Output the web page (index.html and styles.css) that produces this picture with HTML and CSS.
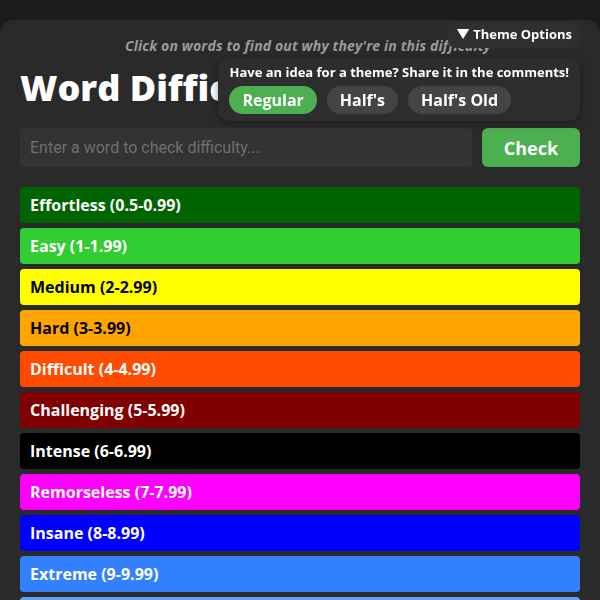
FILE: index.html
```html
<!DOCTYPE html>
<html>
<head>
<meta charset="utf-8">
<link rel="stylesheet" href="styles.css">
</head>
<body>
<div class="page">
  <p class="hint">Click on words to find out why they're in this difficulty</p>
  <h1 class="title">Word Difficulty Checker</h1>
  <div class="search">
    <input class="search-input" type="text" placeholder="Enter a word to check difficulty...">
    <button class="check-btn">Check</button>
  </div>
  <div class="levels">
    <div class="level lv-effortless">Effortless (0.5-0.99)</div>
    <div class="level lv-easy">Easy (1-1.99)</div>
    <div class="level lv-medium">Medium (2-2.99)</div>
    <div class="level lv-hard">Hard (3-3.99)</div>
    <div class="level lv-difficult">Difficult (4-4.99)</div>
    <div class="level lv-challenging">Challenging (5-5.99)</div>
    <div class="level lv-intense">Intense (6-6.99)</div>
    <div class="level lv-remorseless">Remorseless (7-7.99)</div>
    <div class="level lv-insane">Insane (8-8.99)</div>
    <div class="level lv-extreme">Extreme (9-9.99)</div>
    <div class="level lv-next">Impossible (10+)</div>
  </div>
</div>
<div class="theme">
  <div class="theme-toggle">▼ Theme Options</div>
  <div class="theme-panel">
    <div class="theme-note">Have an idea for a theme? Share it in the comments!</div>
    <div class="theme-buttons">
      <span class="pill pill-active">Regular</span>
      <span class="pill">Half's</span>
      <span class="pill">Half's Old</span>
    </div>
  </div>
</div>
</body>
</html>
```
FILE: styles.css
```css
html, body {
  margin: 0;
  padding: 0;
  background: #1c1c1c;
  height: 100%;
  overflow: hidden;
}
body {
  font-family: "Open Sans", "Inter", sans-serif;
  color: #fff;
}
.page {
  margin-top: 20px;
  background: #2a2a2a;
  border-radius: 14px 14px 0 0;
  padding: 17px 20px 20px;
  min-height: 600px;
}
.hint {
  margin: 0;
  text-align: center;
  font-style: italic;
  font-weight: 700;
  font-size: 14px;
  letter-spacing: 0.15px;
  color: #9a9a9a;
  line-height: 18px;
  padding-left: 16px;
  white-space: nowrap;
}
.title {
  margin: 12px 0 0;
  font-size: 36px;
  font-weight: 800;
  line-height: 42px;
  white-space: nowrap;
}
.search {
  display: flex;
  gap: 10px;
  margin-top: 19px;
}
.search-input {
  flex: 1;
  height: 39px;
  box-sizing: border-box;
  background: #333;
  border: none;
  border-radius: 4px;
  padding: 0 10px;
  font-family: "Roboto", sans-serif;
  font-size: 16px;
  color: #fff;
  outline: none;
}
.search-input::placeholder {
  color: #6f6f6f;
}
.check-btn {
  width: 98px;
  height: 39px;
  background: #4caf50;
  border: none;
  border-radius: 6px;
  color: #fff;
  font-family: inherit;
  font-weight: 700;
  font-size: 18px;
}
.levels {
  display: flex;
  flex-direction: column;
  gap: 5px;
  margin-top: 20px;
}
.level {
  height: 36px;
  line-height: 36px;
  border-radius: 4px;
  padding: 0 10px;
  font-weight: 700;
  font-size: 16px;
  color: #fff;
}
.lv-effortless { background: #006400; }
.lv-easy { background: #32cd32; }
.lv-medium { background: #ffff00; color: #000; }
.lv-hard { background: #ffa500; color: #000; }
.lv-difficult { background: #ff4c00; }
.lv-challenging { background: #800000; }
.lv-intense { background: #000; }
.lv-remorseless { background: #ff00ff; }
.lv-insane { background: #0000ff; }
.lv-extreme { background: #3380ff; }
.lv-next { background: #5aa0ff; }

.theme {
  position: fixed;
  top: 22px;
  right: 20px;
  display: flex;
  flex-direction: column;
  align-items: flex-end;
  gap: 10px;
}
.theme-toggle {
  background: #2f2f2f;
  border-radius: 8px;
  padding: 4px 8px 5px 8px;
  font-weight: 700;
  font-size: 13px;
  line-height: 17px;
}
.theme-panel {
  background: #2d2d2d;
  border-radius: 12px;
  padding: 6px 11px 7px;
  box-shadow: 0 2px 8px rgba(0,0,0,0.35);
}
.theme-note {
  font-weight: 700;
  font-size: 13px;
  line-height: 17px;
}
.theme-buttons {
  display: flex;
  gap: 10px;
  margin-top: 5px;
}
.pill {
  background: #444;
  border-radius: 14px;
  padding: 0 13px;
  height: 28px;
  line-height: 28px;
  font-weight: 700;
  font-size: 16px;
}
.pill-active {
  background: #4caf50;
}
```
